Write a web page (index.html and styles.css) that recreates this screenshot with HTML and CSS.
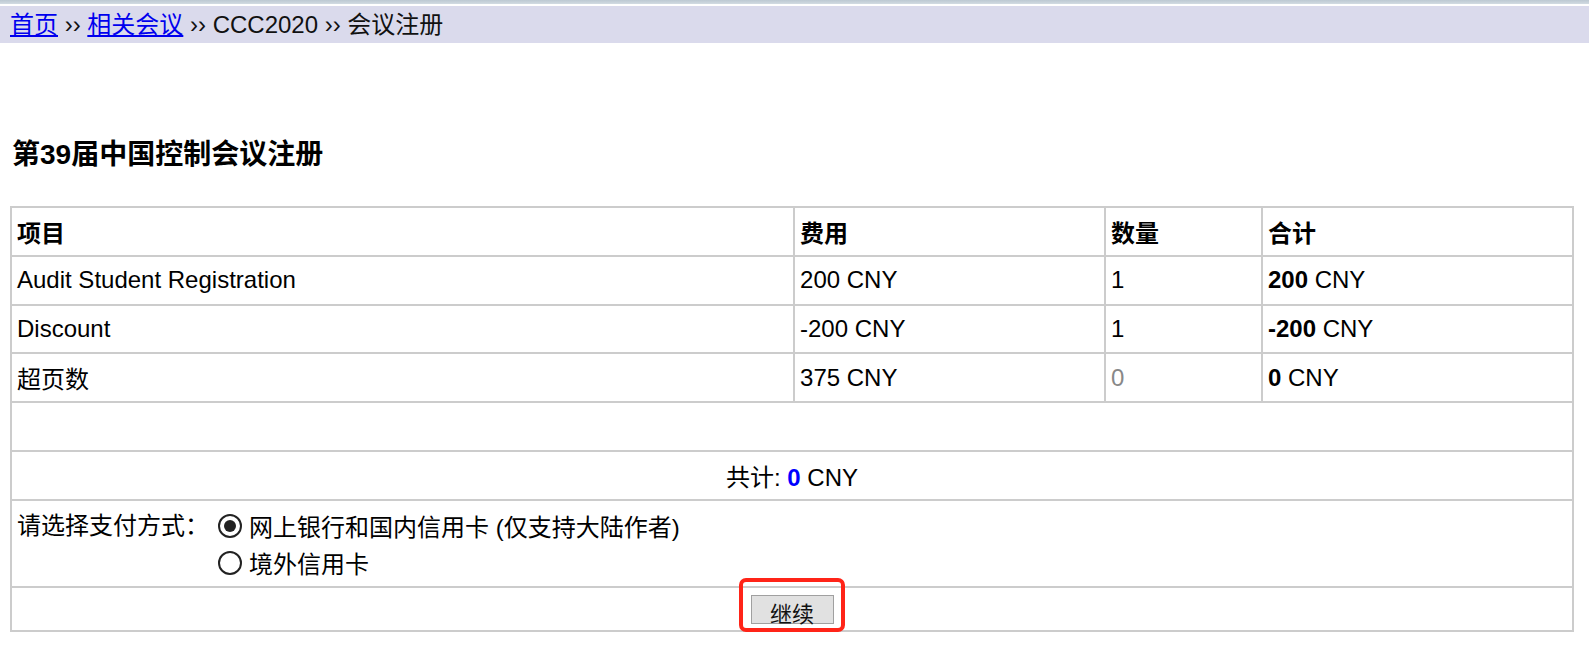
FILE: index.html
```html
<!DOCTYPE html>
<html lang="zh-CN">
<head>
<meta charset="utf-8">
<title>会议注册</title>
<link rel="stylesheet" href="styles.css">
</head>
<body>
<div class="topstrip"></div>
<div class="crumbs"><a href="#">首页</a> ›› <a href="#">相关会议</a> ›› CCC2020 ›› 会议注册</div>
<h1 class="title">第39届中国控制会议注册</h1>
<div class="tablewrap">
<table class="reg">
  <colgroup>
    <col class="c1"><col class="c2"><col class="c3"><col class="c4">
  </colgroup>
  <tr class="head">
    <th>项目</th><th>费用</th><th>数量</th><th>合计</th>
  </tr>
  <tr>
    <td>Audit Student Registration</td><td>200 CNY</td><td>1</td><td><b>200</b> CNY</td>
  </tr>
  <tr>
    <td>Discount</td><td>-200 CNY</td><td>1</td><td><b>-200</b> CNY</td>
  </tr>
  <tr>
    <td>超页数</td><td>375 CNY</td><td class="muted">0</td><td><b>0</b> CNY</td>
  </tr>
  <tr>
    <td colspan="4">&nbsp;</td>
  </tr>
  <tr>
    <td colspan="4" class="center">共计: <b class="blue">0</b> CNY</td>
  </tr>
  <tr class="pay">
    <td colspan="4">
      <div class="payrow">
        <span class="paylabel">请选择支付方式：</span>
        <div class="options">
          <label class="opt"><input type="radio" name="pay" checked><span>网上银行和国内信用卡 (仅支持大陆作者)</span></label>
          <label class="opt"><input type="radio" name="pay"><span>境外信用卡</span></label>
        </div>
      </div>
    </td>
  </tr>
  <tr class="btnrow">
    <td colspan="4" class="center">
      <span class="btnwrap"><button class="go">继续</button><span class="mark"></span></span>
    </td>
  </tr>
</table>
</div>
</body>
</html>
```
FILE: styles.css
```css
html, body {
  margin: 0;
  padding: 0;
  background: #fff;
}
body {
  font-family: "Liberation Sans", Arial, "Noto Sans CJK SC", sans-serif;
  color: #000;
}
.topstrip {
  height: 4px;
  background: linear-gradient(to bottom, #bcc8d2, #d2dbe2);
  margin-bottom: 2px;
}
.crumbs {
  height: 37px;
  line-height: 37px;
  background: #dadaec;
  padding-left: 10px;
  font-size: 24px;
  color: #111;
}
.crumbs a {
  color: #0000ee;
  text-decoration: underline;
}
.title {
  font-size: 28px;
  font-weight: bold;
  line-height: 36px;
  margin: 94px 0 33px 12px;
}
.tablewrap {
  padding: 0 15px 0 10px;
}
.reg {
  width: 100%;
  border-collapse: collapse;
  border: 2px solid #cccccc;
  table-layout: fixed;
  font-size: 24px;
}
.c1 { width: 50.13%; }
.c2 { width: 19.91%; }
.c3 { width: 10.05%; }
.c4 { width: 19.91%; }
.reg th, .reg td {
  border: 2px solid #cccccc;
  height: 46.75px;
  padding: 0 5px;
  text-align: left;
  vertical-align: middle;
}
.reg th {
  font-weight: bold;
}
.muted { color: #888; }
.center { text-align: center !important; }
.blue { color: #0000ff; }
.pay td {
  height: 83px;
  padding-top: 2px;
}
.payrow {
  display: flex;
  align-items: flex-start;
}
.paylabel {
  width: 201px;
  line-height: 37px;
}
.options {
  display: flex;
  flex-direction: column;
}
.opt {
  display: flex;
  align-items: center;
  height: 37px;
}
.opt input {
  appearance: none;
  -webkit-appearance: none;
  width: 24px;
  height: 24px;
  margin: 0 7px 0 0;
  border: 2px solid #222;
  border-radius: 50%;
  box-sizing: border-box;
  background: #fff;
  display: inline-grid;
  place-content: center;
}
.opt input:checked::before {
  content: "";
  width: 12px;
  height: 12px;
  border-radius: 50%;
  background: #222;
}
.btnrow td {
  height: 42px;
  padding: 0;
}
.btnwrap {
  position: relative;
  display: inline-block;
  vertical-align: middle;
}
.go {
  font-family: "Liberation Sans", "Noto Sans CJK SC", sans-serif;
  font-size: 22px;
  width: 83px;
  height: 29px;
  padding: 0;
  background: #e1e1e1;
  border: 1px solid #a0a0a0;
  color: #111;
  display: block;
}
.mark {
  position: absolute;
  left: -12px;
  top: -17px;
  width: 98px;
  height: 46px;
  border: 4px solid #ff2418;
  border-radius: 7px;
}
```
